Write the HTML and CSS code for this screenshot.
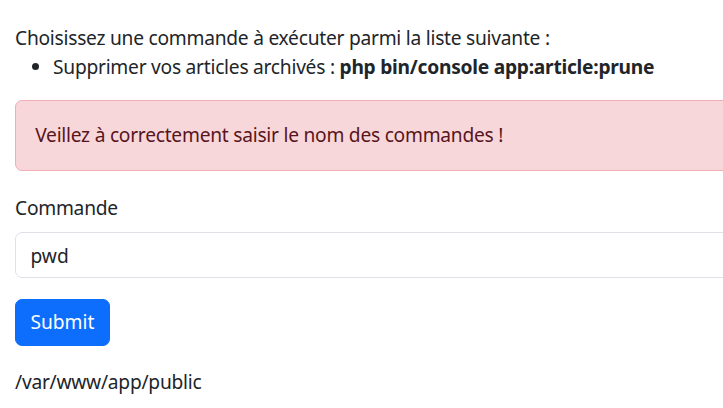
FILE: index.html
```html
<!DOCTYPE html>
<html lang="fr">
<head>
<meta charset="utf-8">
<title>Commandes</title>
<link rel="stylesheet" href="styles.css">
</head>
<body>
<div class="container">
  <p class="intro">Choisissez une commande à exécuter parmi la liste suivante :</p>
  <ul class="cmds">
    <li>Supprimer vos articles archivés : <b>php bin/console app:article:prune</b></li>
  </ul>
  <div class="alert">Veillez à correctement saisir le nom des commandes !</div>
  <form class="form">
    <div class="field">
      <label class="label" for="cmd">Commande</label>
      <input class="input" id="cmd" type="text" value="pwd">
    </div>
    <button class="btn" type="button">Submit</button>
  </form>
  <p class="output">/var/www/app/public</p>
</div>
</body>
</html>
```
FILE: styles.css
```css
html, body {
  margin: 0;
  padding: 0;
  background: #fff;
  overflow: hidden;
}
body {
  font-family: "Noto Sans", "Open Sans", sans-serif;
  font-size: 19.2px;
  line-height: 28.8px;
  letter-spacing: -0.25px;
  color: #212529;
}
.container {
  width: 800px;
  padding: 24px 0 0 15px;
}
.intro {
  margin: 0;
}
.cmds {
  margin: 0 0 18px 0;
  padding-left: 38px;
}
.cmds b {
  font-weight: 700;
}
.alert {
  background: #f8d7da;
  border: 1px solid #f1aeb5;
  color: #58151c;
  border-radius: 7px;
  padding: 20.5px 19.2px;
  margin-bottom: 22.5px;
}
.form {
  margin: 0;
}
.field {
  display: flex;
  flex-direction: column;
  margin-bottom: 20.5px;
}
.label {
  margin-bottom: 9.6px;
}
.input {
  font: inherit;
  color: #212529;
  height: 46px;
  box-sizing: border-box;
  padding: 0 14.4px;
  border: 1px solid #dee2e6;
  border-radius: 7px;
  outline: none;
}
.btn {
  font: inherit;
  color: #fff;
  background: #0d6efd;
  border: 1px solid #0d6efd;
  border-radius: 7px;
  height: 47px;
  padding: 0 14.4px;
  display: block;
}
.output {
  margin: 22px 0 0 0;
}
```
